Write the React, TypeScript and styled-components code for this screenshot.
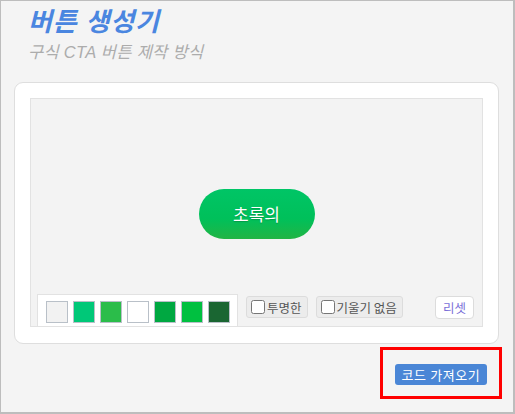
import React, { FC, useState } from 'react';
import { styled, createGlobalStyle } from 'styled-components';

const GlobalStyle = createGlobalStyle`
    html, body {
        margin: 0;
        padding: 0;
    }
    body {
        font-family: 'Noto Sans CJK KR', 'Liberation Sans', sans-serif;
    }
`;

type Swatch = { color: string };

const swatches: Swatch[] = [
    { color: '#f2f2f2' },
    { color: '#00c878' },
    { color: '#2bbd4a' },
    { color: '#ffffff' },
    { color: '#00a841' },
    { color: '#00c040' },
    { color: '#1a6632' },
];

const App: FC = () => {
    const [transparent, setTransparent] = useState(false);
    const [flat, setFlat] = useState(false);

    return (
        <>
            <GlobalStyle />
            <Page>
                <Header>
                    <Title>버튼 생성기</Title>
                    <Subtitle>구식 CTA 버튼 제작 방식</Subtitle>
                </Header>
                <Card>
                    <Preview>
                        <Stage>
                            <GreenButton>초록의</GreenButton>
                        </Stage>
                        <Toolbar>
                            <SwatchPanel>
                                {swatches.map((s, i) => (
                                    <SwatchBox key={i} $color={s.color} />
                                ))}
                            </SwatchPanel>
                            <Toggle>
                                <input
                                    type="checkbox"
                                    checked={transparent}
                                    onChange={() => setTransparent(!transparent)}
                                />
                                투명한
                            </Toggle>
                            <Toggle>
                                <input type="checkbox" checked={flat} onChange={() => setFlat(!flat)} />
                                기울기 없음
                            </Toggle>
                            <Spacer />
                            <ResetButton>리셋</ResetButton>
                        </Toolbar>
                    </Preview>
                </Card>
                <Footer>
                    <Highlight>
                        <CodeButton>코드 가져오기</CodeButton>
                    </Highlight>
                </Footer>
            </Page>
        </>
    );
};

export default App;

const Page = styled.div`
    box-sizing: border-box;
    width: 515px;
    height: 414px;
    background: #f4f4f4;
    border: 2px solid #bdbdbd;
    border-top-width: 1px;
    border-left-width: 1px;
    padding: 0 14px 0 13px;
    display: flex;
    flex-direction: column;
`;

const Header = styled.div`
    padding: 4px 0 0 14px;
    height: 81px;
    box-sizing: border-box;
`;

const Title = styled.h1`
    margin: 0;
    font-family: 'Liberation Sans', 'Noto Sans CJK KR', sans-serif;
    font-size: 26px;
    font-weight: 700;
    font-style: italic;
    color: #4a86e0;
    line-height: 34px;
    letter-spacing: 0.8px;
`;

const Subtitle = styled.div`
    margin-top: 3px;
    font-family: 'Liberation Sans', 'Noto Sans CJK KR', sans-serif;
    font-size: 16.5px;
    font-style: italic;
    color: #acacac;
    line-height: 20px;
    letter-spacing: 0.3px;
`;

const Card = styled.div`
    background: #ffffff;
    border: 1px solid #dedede;
    border-radius: 9px;
    padding: 15px 15px 16px 15px;
    height: 262px;
    box-sizing: border-box;
    display: flex;
`;

const Preview = styled.div`
    flex: 1;
    background: #f3f3f3;
    border: 1px solid #e2e2e2;
    display: flex;
    flex-direction: column;
`;

const Stage = styled.div`
    flex: 1;
    display: flex;
    align-items: center;
    justify-content: center;
    padding-top: 34px;
`;

const GreenButton = styled.button`
    width: 116px;
    height: 50px;
    border: none;
    border-radius: 25px;
    background: linear-gradient(to bottom, #00c566 0%, #00c05a 60%, #22b444 100%);
    color: #ffffff;
    font-family: 'Noto Sans CJK KR', 'Liberation Sans', sans-serif;
    font-size: 17px;
    text-shadow: 0 1px 1px rgba(0, 0, 0, 0.2);
    cursor: pointer;
`;

const Toolbar = styled.div`
    display: flex;
    align-items: flex-end;
    padding: 0 8px 0 6px;
    height: 32px;
`;

const SwatchPanel = styled.div`
    display: flex;
    gap: 5px;
    background: #ffffff;
    border: 1px solid #e2e2e2;
    border-bottom: none;
    padding: 6px 7px 0 8px;
    height: 32px;
    box-sizing: border-box;
`;

const SwatchBox = styled.div<{ $color: string }>`
    width: 22px;
    height: 22px;
    box-sizing: border-box;
    border: 1px solid #b9c0c8;
    background: ${(p) => p.$color};
`;

const Toggle = styled.label`
    display: flex;
    align-items: center;
    gap: 2px;
    height: 22px;
    margin: 0 0 8px 8px;
    padding: 0 5px 0 4px;
    box-sizing: border-box;
    background: #ececec;
    border: 1px solid #dcdcdc;
    border-radius: 3px;
    font-size: 12.5px;
    color: #555;
    input {
        margin: 0;
        width: 14px;
        height: 14px;
    }
`;

const Spacer = styled.div`
    flex: 1;
`;

const ResetButton = styled.button`
    height: 23px;
    margin-bottom: 7px;
    padding: 0 7px;
    background: #ffffff;
    border: 1px solid #dcdcdc;
    border-radius: 4px;
    font-family: 'Noto Sans CJK KR', 'Liberation Sans', sans-serif;
    font-size: 12.5px;
    color: #7a6fd8;
`;

const Footer = styled.div`
    display: flex;
    justify-content: flex-end;
    padding: 3px 0 0 0;
    margin-right: -3px;
`;

const Highlight = styled.div`
    border: 3px solid #ff0000;
    padding: 14px 0 0 0;
    width: 122px;
    height: 52px;
    box-sizing: border-box;
    display: flex;
    justify-content: center;
    align-items: flex-start;
`;

const CodeButton = styled.button`
    height: 21px;
    padding: 0 7px;
    background: #4a86d6;
    color: #ffffff;
    border: none;
    border-radius: 3px;
    font-family: 'Noto Sans CJK KR', 'Liberation Sans', sans-serif;
    font-size: 13px;
    line-height: 21px;
    letter-spacing: 0.6px;
    white-space: nowrap;
`;
